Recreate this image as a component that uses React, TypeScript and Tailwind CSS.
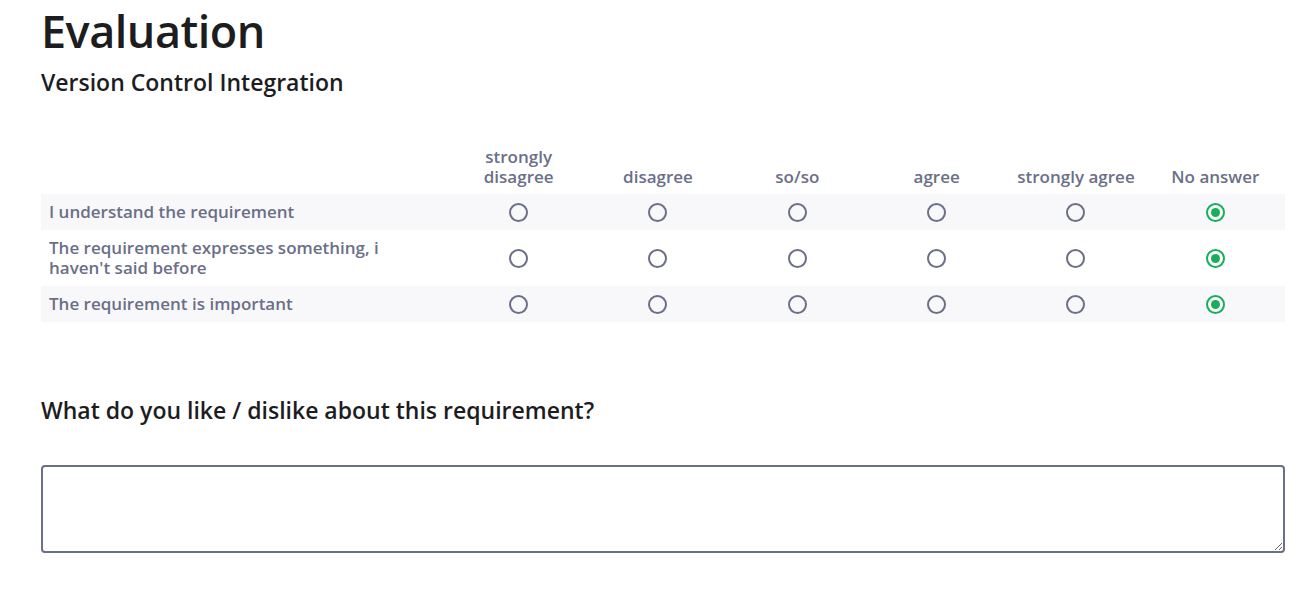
import { useState } from "react";

const CHOICES = ["strongly disagree", "disagree", "so/so", "agree", "strongly agree", "No answer"];

const QUESTIONS = [
  "I understand the requirement",
  "The requirement expresses something, i haven't said before",
  "The requirement is important",
];

function Radio({ checked, onClick }: { checked: boolean; onClick: () => void }) {
  return (
    <button
      type="button"
      onClick={onClick}
      className={`flex h-[19px] w-[19px] items-center justify-center rounded-full border-2 ${
        checked ? "border-[#1aae5c]" : "border-[#6b6f88]"
      }`}
    >
      {checked && <span className="h-[9px] w-[9px] rounded-full bg-[#1aae5c]" />}
    </button>
  );
}

export default function App() {
  const [answers, setAnswers] = useState<number[]>([5, 5, 5]);
  const [comment, setComment] = useState("");

  return (
    <div
      className="pl-[41px] pr-[24px] pt-[3px] text-[#1d1d1f]"
      style={{ fontFamily: '"Open Sans", "Noto Sans", sans-serif' }}
    >
      <h1 className="text-[45px] font-semibold leading-[56px] tracking-[-0.5px]">Evaluation</h1>
      <h2 className="mt-[9px] text-[23px] font-semibold leading-[28px]">Version Control Integration</h2>

      {/* rating grid */}
      <div className="mt-[51px] grid grid-cols-[408px_repeat(6,1fr)] text-[17px] font-semibold text-[#6b6f88]">
        <div />
        {CHOICES.map((c) => (
          <div key={c} className="flex items-end justify-center pb-[7px] text-center leading-[20px]">
            <span className={c === "strongly disagree" ? "w-[80px]" : ""}>{c}</span>
          </div>
        ))}

        {QUESTIONS.map((q, i) => (
          <div key={q} className="contents">
            <div
              className={`flex items-center px-[8px] leading-[20px] ${
                i % 2 === 0 ? "h-[36px] bg-[#f8f8fa]" : "h-[56px] pr-[40px]"
              }`}
            >
              {q}
            </div>
            {CHOICES.map((c, j) => (
              <div
                key={c}
                className={`flex items-center justify-center ${i % 2 === 0 ? "bg-[#f8f8fa]" : ""}`}
              >
                <Radio
                  checked={answers[i] === j}
                  onClick={() => setAnswers((a) => a.map((v, k) => (k === i ? j : v)))}
                />
              </div>
            ))}
          </div>
        ))}
      </div>

      <h3 className="mt-[74px] text-[23px] font-semibold leading-[28px]">
        What do you like / dislike about this requirement?
      </h3>

      <textarea
        value={comment}
        onChange={(e) => setComment(e.target.value)}
        className="mt-[41px] block h-[88px] w-full rounded-[4px] border-2 border-[#6b6f88] p-2 outline-none"
      />
    </div>
  );
}
